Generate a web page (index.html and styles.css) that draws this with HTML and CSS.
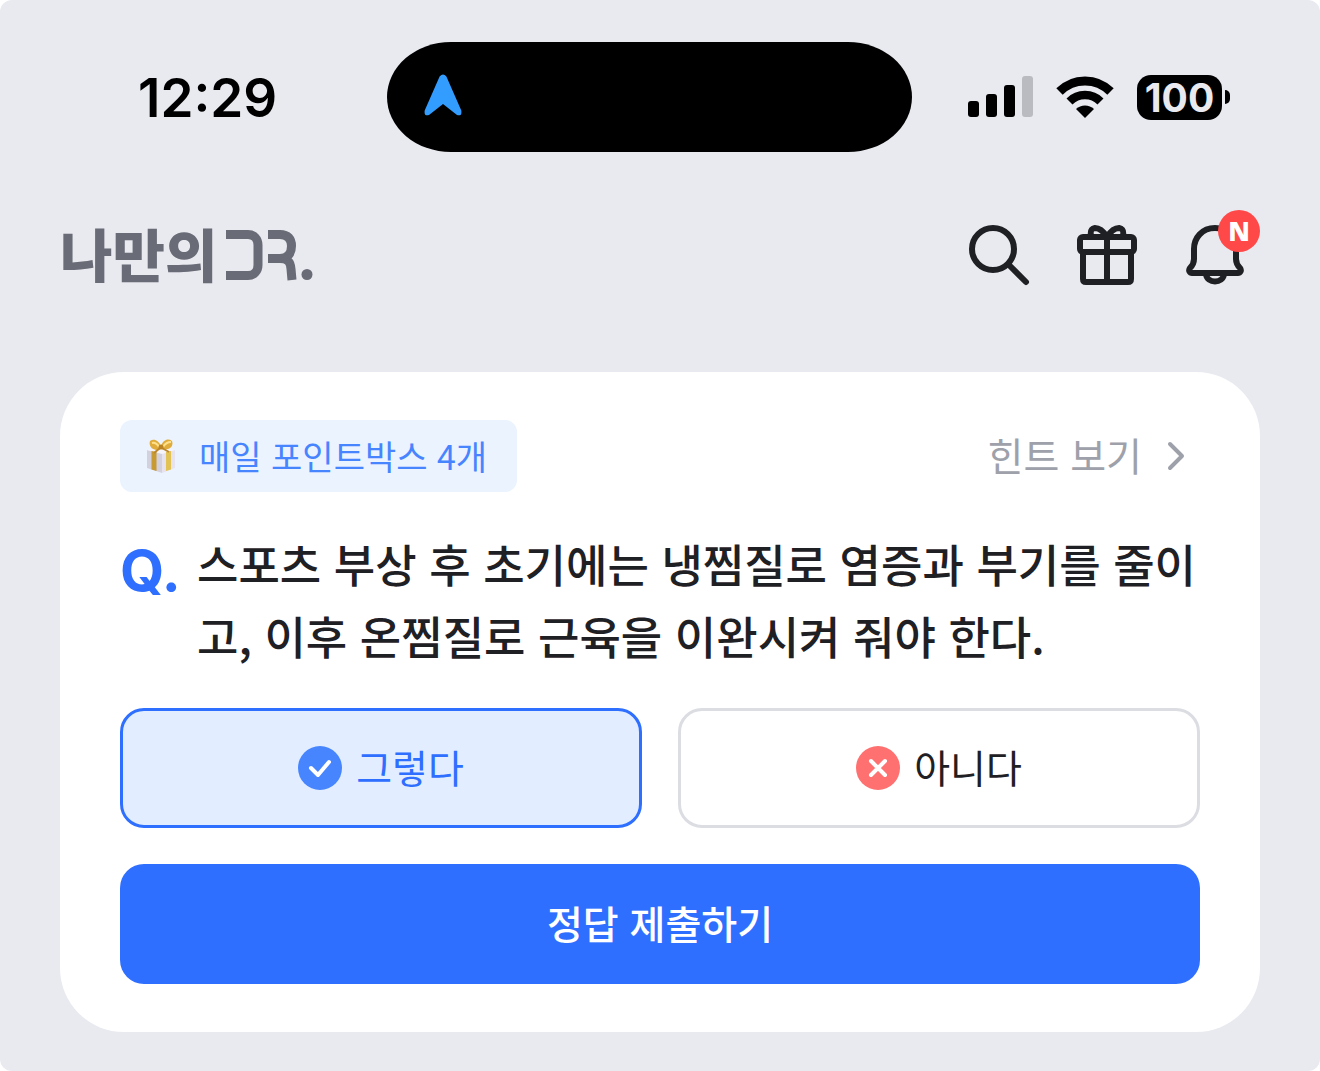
FILE: index.html
```html
<!DOCTYPE html>
<html lang="ko">
<head>
<meta charset="utf-8">
<meta name="viewport" content="width=device-width, initial-scale=1">
<title>나만의DR.</title>
<link rel="stylesheet" href="styles.css">
</head>
<body>
<div class="screen">
  <div class="status">
    <time class="clock">12:29</time>
    <div class="island">
      <svg class="arrow" viewBox="0 0 38 42" width="38" height="42" aria-hidden="true"><path d="M15.600 2.600Q19 -1.400 22.400 2.600L37.300 36.500Q38.200 42.600 33 41L19 30L5 41Q-.2 42.600.7 36.500Z" fill="#339dff"/></svg>
    </div>
    <div class="indicators">
      <svg viewBox="0 0 65 42" width="65" height="42" aria-label="신호 세기"><rect y="25" width="11" height="16" rx="3"/><rect x="18" y="18" width="11" height="23" rx="3"/><rect x="36" y="9" width="11" height="32" rx="3"/><rect x="54" width="11" height="41" rx="3" fill="#babbc0"/></svg>
      <svg viewBox="0 0 58 42" width="58" height="42" aria-label="와이파이"><g fill="none" stroke="#000"><path d="M3.500 15.500A36 36 0 0 1 54.500 15.500" stroke-width="9"/><path d="M13.500 25.500A22 22 0 0 1 44.500 25.500" stroke-width="8.500"/></g><path d="M20 33A13 13 0 0 1 38 33L29 42Z"/></svg>
      <div class="battery"><span class="charge">100</span><span class="nub"></span></div>
    </div>
  </div>

  <header class="appbar">
    <a class="logo" href="#" aria-label="나만의DR.">
      <span class="logo-name">나만의</span>
      <svg viewBox="0 0 88 54" width="88" height="54" aria-hidden="true"><g fill="none" stroke="#696b76" stroke-width="9"><path d="M0 6.500H22C28 6.500 32 11 32 17V37C32 43 28 47.500 22 47.500H0"/><path d="M42 6.500H54C62 6.500 65.500 11 65.500 18S62 30.500 54 30.500H42M54 30.500C62 30.500 64.500 34 65 41L66 52"/></g><circle cx="81" cy="46.500" r="5.500" fill="#696b76"/></svg>
    </a>
    <nav class="tools">
      <button class="tool" type="button" aria-label="검색"><svg viewBox="0 0 72 72" width="72" height="72"><circle cx="30" cy="30" r="21"/><path d="M46 46L63 63"/></svg></button>
      <button class="tool" type="button" aria-label="선물"><svg viewBox="0 0 72 72" width="72" height="72"><rect x="9" y="18" width="54" height="15" rx="3"/><path d="M12 34V60Q12 63 15 63H57Q60 63 60 60V34M36 18V63M36 18C31 10 27 9 24 9C18 10 20 15 20 18M36 18C41 10 45 9 48 9C54 10 52 15 52 18"/></svg></button>
      <button class="tool" type="button" aria-label="새 알림"><svg viewBox="0 0 72 72" width="72" height="72"><path d="M36 9C23 9 15 19 15 30V40C15 44 14 46 11 49C9 52 11 54 13 54H59C61 54 63 52 61 49C58 46 57 44 57 40V30C57 19 49 9 36 9ZM27 55C28 65 44 65 45 55"/></svg><span class="dot">N</span></button>
    </nav>
  </header>

  <main class="card">
    <div class="card-top">
      <span class="points">
        <svg viewBox="0 0 28 34" width="28" height="34" aria-hidden="true"><path d="M0 11L15 14V34L0 29Z" fill="#d4d1df"/><path d="M15 14L28 11V29L15 34Z" fill="#e6e3ee"/><path d="M0 11L13 8L28 11L15 15Z" fill="#f5f4f9"/><path d="M4.500 12L9.500 13V32L4.500 30.500Z" fill="#c79a32"/><path d="M19 13L24 12V30.500L19 32Z" fill="#e3c254"/><path d="M14 10C7 13 1 8 3 2C7-1 12 2 14 7C16 1 21-1 25 2C27 8 22 12 14 10Z" fill="#e0ad3c"/><path d="M5 4Q9 3 12 8M24 3Q19 3 16 8" fill="none" stroke="#ffe18b" stroke-width="2"/><path d="M13 9L7 14M15 9L22 13" stroke="#bd872b" stroke-width="2"/><circle cx="14" cy="8" r="2.500" fill="#b98224"/></svg>
        매일 포인트박스 4개
      </span>
      <a class="hint" href="#"><span class="label">힌트 보기</span>
        <svg viewBox="0 0 18 30" width="18" height="30" aria-hidden="true"><path d="M3 3L15 15L3 27" fill="none" stroke="#9ea1aa" stroke-width="4" stroke-linecap="round" stroke-linejoin="round"/></svg>
      </a>
    </div>
    <form class="quiz">
      <div class="question"><span class="q">Q.</span><p class="question-text">스포츠 부상 후 초기에는 냉찜질로 염증과 부기를 줄이고, 이후 온찜질로 근육을 이완시켜 줘야 한다.</p></div>
      <div class="answers">
        <button class="answer selected" type="button" aria-pressed="true"><svg viewBox="0 0 44 44" width="44" height="44" aria-hidden="true"><circle cx="22" cy="22" r="22" fill="#4785ff"/><path d="M13 22L20 29L31 16"/></svg><span class="label">그렇다</span></button>
        <button class="answer" type="button" aria-pressed="false"><svg viewBox="0 0 44 44" width="44" height="44" aria-hidden="true"><circle cx="22" cy="22" r="22" fill="#ff7070"/><path d="M15 15L29 29M29 15L15 29"/></svg><span class="label">아니다</span></button>
      </div>
      <button class="submit" type="button"><span class="label">정답 제출하기</span></button>
    </form>
  </main>
</div>
</body>
</html>
```
FILE: styles.css
```css
* { box-sizing: border-box; }
body {
  margin: 0;
  background: #fff;
  color: #1f2024;
  font-family: "Noto Sans CJK KR", sans-serif;
  font-weight: 400;
}
button { margin: 0; padding: 0; font: inherit; color: inherit; cursor: pointer; }
a { color: inherit; text-decoration: none; }
svg { display: block; flex: none; }

.screen {
  min-height: 100vh;
  padding-bottom: 39px;
  background: #e9eaf0;
  border-radius: 12px;
}

.status {
  display: grid;
  grid-template-columns: 249px 1fr 318px;
  align-items: center;
  padding: 42px 90px 0 138px;
  color: #000;
}
.clock { padding-top: 2px; font: 600 53px/64px Inter, sans-serif; }
.island {
  display: flex;
  align-items: center;
  height: 110px;
  padding: 0 37px 4px;
  background: #000;
  border-radius: 64px / 55px;
}
.indicators { display: flex; align-items: center; justify-content: flex-end; gap: 23px; }
.battery { display: flex; align-items: center; gap: 3px; }
.charge {
  width: 85px;
  border-radius: 14px;
  background: #000;
  color: #e9eaf0;
  font: 700 39px/45px Inter, sans-serif;
  text-align: center;
}
.nub { width: 5px; height: 14px; background: #000; border-radius: 0 5px 5px 0; }

.appbar {
  display: flex;
  align-items: center;
  justify-content: space-between;
  padding: 67px 69px 81px 60px;
}
.logo { display: flex; align-items: center; gap: 9px; color: #696b76; }
.logo-name { padding-bottom: 6px; font-size: 57px; font-weight: 900; line-height: 64px; }
.tools { display: flex; gap: 36px; }
.tool { position: relative; border: 0; background: none; }
.tool svg { fill: none; stroke: #1f2024; stroke-width: 6; stroke-linecap: round; stroke-linejoin: round; }
.dot {
  position: absolute;
  top: -9px;
  right: -9px;
  width: 42px;
  border-radius: 50%;
  background: #ff4848;
  color: #fff;
  font: 800 26px/42px "Open Sans", sans-serif;
  text-align: center;
}

.card { margin: 0 60px; padding: 48px 60px; background: #fff; border-radius: 64px; }
.card-top { display: flex; align-items: center; justify-content: space-between; }
.points {
  display: flex;
  align-items: center;
  gap: 24px;
  padding: 0 30px 0 27px;
  border-radius: 12px;
  background: #ebf3ff;
  color: #4785ff;
  font-size: 34px;
  line-height: 72px;
}
.hint {
  display: flex;
  align-items: center;
  gap: 25px;
  height: 72px;
  padding-right: 15px;
  color: #9ea1aa;
}
.label { padding-bottom: 5px; font-size: 39px; line-height: 60px; }
.quiz { display: grid; gap: 36px; margin-top: 36px; }
.question { display: flex; gap: 20px; }
.q { width: 57px; color: #2f6fff; font: 700 57px/86px Inter, sans-serif; }
.question-text { flex: 1; margin: 0; font-size: 45px; font-weight: 500; line-height: 72px; word-break: break-all; }
.answers { display: grid; grid-template-columns: 1fr 1fr; gap: 36px; }
.answer {
  display: flex;
  align-items: center;
  justify-content: center;
  gap: 14px;
  height: 120px;
  border: 3px solid #dcdde2;
  border-radius: 24px;
  background: #fff;
}
.answer path { fill: none; stroke: #fff; stroke-width: 4; stroke-linecap: round; stroke-linejoin: round; }
.selected { border-color: #2f6fff; background: #e2eeff; color: #2f6fff; }
.submit {
  display: flex;
  align-items: center;
  justify-content: center;
  height: 120px;
  border: 0;
  border-radius: 24px;
  background: #2f6fff;
  color: #fff;
  font-weight: 500;
}
```
